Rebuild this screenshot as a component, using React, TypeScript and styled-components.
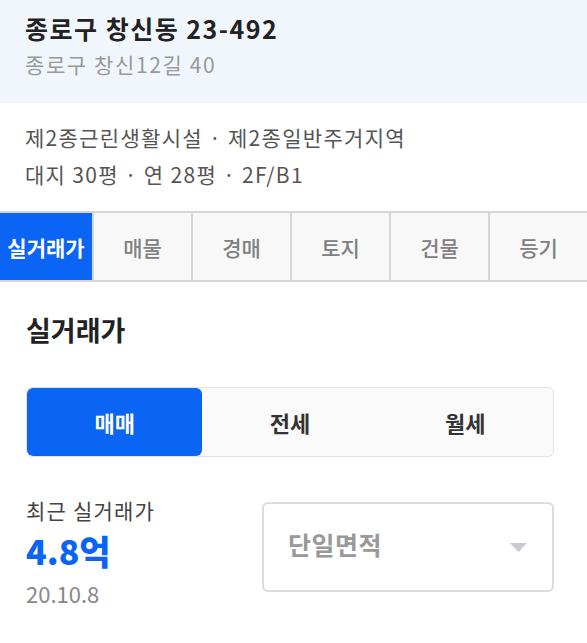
import { createGlobalStyle } from "styled-components";
import styled from "styled-components";
import { useState } from "react";

const GlobalStyle = createGlobalStyle`
  html, body {
    margin: 0;
    padding: 0;
    background: #ffffff;
  }
  body {
    font-family: "Noto Sans CJK KR", "Noto Sans", sans-serif;
    color: #222;
  }
  * {
    box-sizing: border-box;
  }
`;

const tabs = ["실거래가", "매물", "경매", "토지", "건물", "등기"];
const dealTypes = ["매매", "전세", "월세"];

export default function App() {
  const [activeTab, setActiveTab] = useState(0);
  const [dealType, setDealType] = useState(0);

  return (
    <Page>
      <GlobalStyle />
      <AddressHeader>
        <AddressTitle>종로구 창신동 23-492</AddressTitle>
        <AddressSub>종로구 창신12길 40</AddressSub>
      </AddressHeader>

      <InfoBlock>
        <InfoLine>제2종근린생활시설 · 제2종일반주거지역</InfoLine>
        <InfoLine>대지 30평 · 연 28평 · 2F/B1</InfoLine>
      </InfoBlock>

      <TabBar>
        {tabs.map((t, i) => (
          <Tab key={t} $active={activeTab === i} $first={i === 0} onClick={() => setActiveTab(i)}>
            {t}
          </Tab>
        ))}
      </TabBar>

      <Section>
        <SectionTitle>실거래가</SectionTitle>

        <Segmented>
          {dealTypes.map((d, i) => (
            <Segment key={d} $active={dealType === i} onClick={() => setDealType(i)}>
              {d}
            </Segment>
          ))}
        </Segmented>

        <PriceRow>
          <PriceInfo>
            <PriceLabel>최근 실거래가</PriceLabel>
            <PriceValue>4.8억</PriceValue>
            <PriceDate>20.10.8</PriceDate>
          </PriceInfo>
          <AreaSelect>
            <AreaText>단일면적</AreaText>
            <svg width="17" height="9" viewBox="0 0 17 9">
              <path d="M0 0 H17 L8.5 9 Z" fill="#c9cbd0" />
            </svg>
          </AreaSelect>
        </PriceRow>
      </Section>
    </Page>
  );
}

const Page = styled.main`
  width: 587px;
  min-height: 643px;
  background: #ffffff;
`;

const AddressHeader = styled.header`
  height: 103px;
  background: #f1f6fd;
  padding: 10px 25px 0;
  display: flex;
  flex-direction: column;
`;

const AddressTitle = styled.h1`
  margin: 0;
  font-size: 25px;
  font-weight: 700;
  letter-spacing: 1.5px;
  line-height: 36px;
  color: #222;
`;

const AddressSub = styled.p`
  margin: 3px 0 0;
  font-size: 21px;
  letter-spacing: 1.6px;
  line-height: 30px;
  color: #999;
`;

const InfoBlock = styled.div`
  padding: 20px 25px 23px;
  display: flex;
  flex-direction: column;
  gap: 9px;
`;

const InfoLine = styled.p`
  margin: 0;
  font-size: 21px;
  letter-spacing: 1.3px;
  line-height: 28px;
  color: #555;
`;

const TabBar = styled.nav`
  display: flex;
  height: 71px;
  background: #f8f8f8;
  border-top: 2px solid #d6d6d6;
  border-bottom: 2px solid #d6d6d6;
`;

const Tab = styled.button<{ $active: boolean; $first: boolean }>`
  flex: 0 0 ${(p) => (p.$first ? "92px" : "99px")};
  border: none;
  border-left: ${(p) => (p.$first ? "none" : "2px solid #d6d6d6")};
  background: ${(p) => (p.$active ? "#0a64f4" : "#f8f8f8")};
  color: ${(p) => (p.$active ? "#ffffff" : "#808080")};
  font-family: inherit;
  font-size: 21px;
  font-weight: ${(p) => (p.$active ? 700 : 500)};
  padding: 0;
  cursor: pointer;
  white-space: nowrap;
`;

const Section = styled.section`
  padding: 29px 33px 0 26px;
  display: flex;
  flex-direction: column;
`;

const SectionTitle = styled.h2`
  margin: 0;
  font-size: 27px;
  font-weight: 700;
  line-height: 38px;
  color: #222;
`;

const Segmented = styled.div`
  margin-top: 38px;
  display: flex;
  height: 70px;
  border: 1px solid #e2e2e2;
  border-radius: 6px;
  background: #fafafa;
  overflow: hidden;
`;

const Segment = styled.button<{ $active: boolean }>`
  flex: 1;
  border: none;
  border-radius: 6px;
  background: ${(p) => (p.$active ? "#0a64f4" : "transparent")};
  color: ${(p) => (p.$active ? "#ffffff" : "#333")};
  font-family: inherit;
  font-size: 22px;
  font-weight: 700;
  cursor: pointer;
`;

const PriceRow = styled.div`
  margin-top: 40px;
  display: flex;
  justify-content: space-between;
  align-items: flex-start;
`;

const PriceInfo = styled.div`
  display: flex;
  flex-direction: column;
`;

const PriceLabel = styled.span`
  font-size: 21px;
  letter-spacing: 1.2px;
  line-height: 26px;
  color: #444;
`;

const PriceValue = styled.strong`
  margin-top: 8px;
  font-size: 34px;
  font-weight: 800;
  line-height: 40px;
  color: #0a64f4;
`;

const PriceDate = styled.span`
  margin-top: 8px;
  font-size: 22px;
  line-height: 28px;
  color: #888;
`;

const AreaSelect = styled.div`
  margin-top: 5px;
  width: 292px;
  height: 90px;
  border: 2px solid #dcdcdc;
  border-radius: 6px;
  display: flex;
  align-items: center;
  justify-content: space-between;
  padding: 0 25px 0 24px;
`;

const AreaText = styled.span`
  font-size: 25px;
  font-weight: 700;
  letter-spacing: 0.5px;
  color: #999;
  margin-top: -6px;
`;
